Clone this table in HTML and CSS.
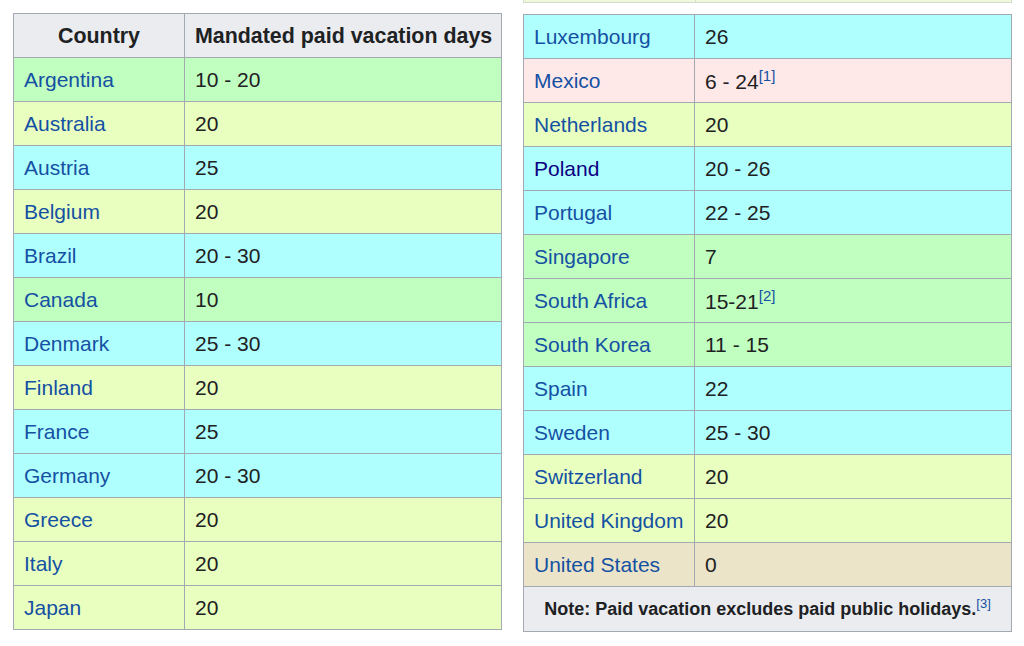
FILE: index.html
```html
<!DOCTYPE html>
<html>
<head>
<meta charset="utf-8">
<link rel="stylesheet" href="styles.css">
</head>
<body>
<div class="page">
  <table class="wt left">
    <thead>
      <tr><th class="c1">Country</th><th class="c2">Mandated paid vacation days</th></tr>
    </thead>
    <tbody>
      <tr class="g"><td><a>Argentina</a></td><td>10 - 20</td></tr>
      <tr class="y"><td><a>Australia</a></td><td>20</td></tr>
      <tr class="c"><td><a>Austria</a></td><td>25</td></tr>
      <tr class="y"><td><a>Belgium</a></td><td>20</td></tr>
      <tr class="c"><td><a>Brazil</a></td><td>20 - 30</td></tr>
      <tr class="g"><td><a>Canada</a></td><td>10</td></tr>
      <tr class="c"><td><a>Denmark</a></td><td>25 - 30</td></tr>
      <tr class="y"><td><a>Finland</a></td><td>20</td></tr>
      <tr class="c"><td><a>France</a></td><td>25</td></tr>
      <tr class="c"><td><a>Germany</a></td><td>20 - 30</td></tr>
      <tr class="y"><td><a>Greece</a></td><td>20</td></tr>
      <tr class="y"><td><a>Italy</a></td><td>20</td></tr>
      <tr class="y"><td><a>Japan</a></td><td>20</td></tr>
    </tbody>
  </table>
  <div class="rightcol">
    <div class="prev"><span class="p1"></span><span class="p2"></span></div>
    <table class="wt right">
      <tbody>
        <tr class="c"><td class="c1"><a>Luxembourg</a></td><td class="c2">26</td></tr>
        <tr class="p"><td><a>Mexico</a></td><td>6 - 24<sup>[1]</sup></td></tr>
        <tr class="y"><td><a>Netherlands</a></td><td>20</td></tr>
        <tr class="c"><td><a class="visited">Poland</a></td><td>20 - 26</td></tr>
        <tr class="c"><td><a>Portugal</a></td><td>22 - 25</td></tr>
        <tr class="g"><td><a>Singapore</a></td><td>7</td></tr>
        <tr class="g"><td><a>South Africa</a></td><td>15-21<sup>[2]</sup></td></tr>
        <tr class="g"><td><a>South Korea</a></td><td>11 - 15</td></tr>
        <tr class="c"><td><a>Spain</a></td><td>22</td></tr>
        <tr class="c"><td><a>Sweden</a></td><td>25 - 30</td></tr>
        <tr class="y"><td><a>Switzerland</a></td><td>20</td></tr>
        <tr class="y"><td><a>United Kingdom</a></td><td>20</td></tr>
        <tr class="u"><td><a>United States</a></td><td>0</td></tr>
        <tr class="note"><td colspan="2">Note: Paid vacation excludes paid public holidays.<sup>[3]</sup></td></tr>
      </tbody>
    </table>
  </div>
</div>
</body>
</html>
```

FILE: styles.css
```css
html, body {
  margin: 0;
  padding: 0;
  background: #ffffff;
}
body {
  font-family: "Liberation Sans", Arial, sans-serif;
  color: #202122;
}
.page {
  display: flex;
  align-items: flex-start;
  gap: 21px;
  padding-left: 13px;
}
.wt {
  border-collapse: collapse;
  font-size: 21px;
  table-layout: fixed;
}
.left {
  margin-top: 13px;
  width: 488px;
}
.right {
  width: 489px;
}
.wt th, .wt td {
  border: 1px solid #a2a9b1;
  height: 44px;
  padding: 0 10px;
  box-sizing: border-box;
  text-align: left;
  vertical-align: middle;
  line-height: 24px;
}
.wt th {
  background: #eaecf0;
  font-weight: bold;
  font-size: 21.4px;
  text-align: center;
  padding: 0 4px;
}
.left th.c2 {
  text-align: left;
  padding-left: 10px;
}
.c1 { width: 171px; }
.c2 { width: 317px; }
.wt a {
  color: #1551a3;
  text-decoration: none;
}
.wt a.visited { color: #0b0080; }
.g td { background: #c0ffc0; }
.y td { background: #e8ffc0; }
.c td { background: #b0ffff; }
.p td { background: #ffe8e8; }
.u td { background: #ece4c8; }
.wt sup {
  font-size: 15px;
  line-height: 1;
  vertical-align: 8px;
  color: #1551a3;
}
.note td {
  background: #eaecf0;
  font-weight: bold;
  font-size: 18px;
  text-align: center;
  height: 45px;
}
.note sup {
  font-size: 13px;
  font-weight: normal;
  vertical-align: 7px;
}
.rightcol {
  display: flex;
  flex-direction: column;
  gap: 11px;
}
.prev {
  display: flex;
  height: 3px;
  width: 489px;
  box-sizing: border-box;
}
.prev span {
  background: #eef8dc;
  border-bottom: 1px solid #d6dccc;
  border-left: 1px solid #d6dccc;
}
.prev .p1 { width: 171px; }
.prev .p2 { flex: 1; border-right: 1px solid #d6dccc; }
```
